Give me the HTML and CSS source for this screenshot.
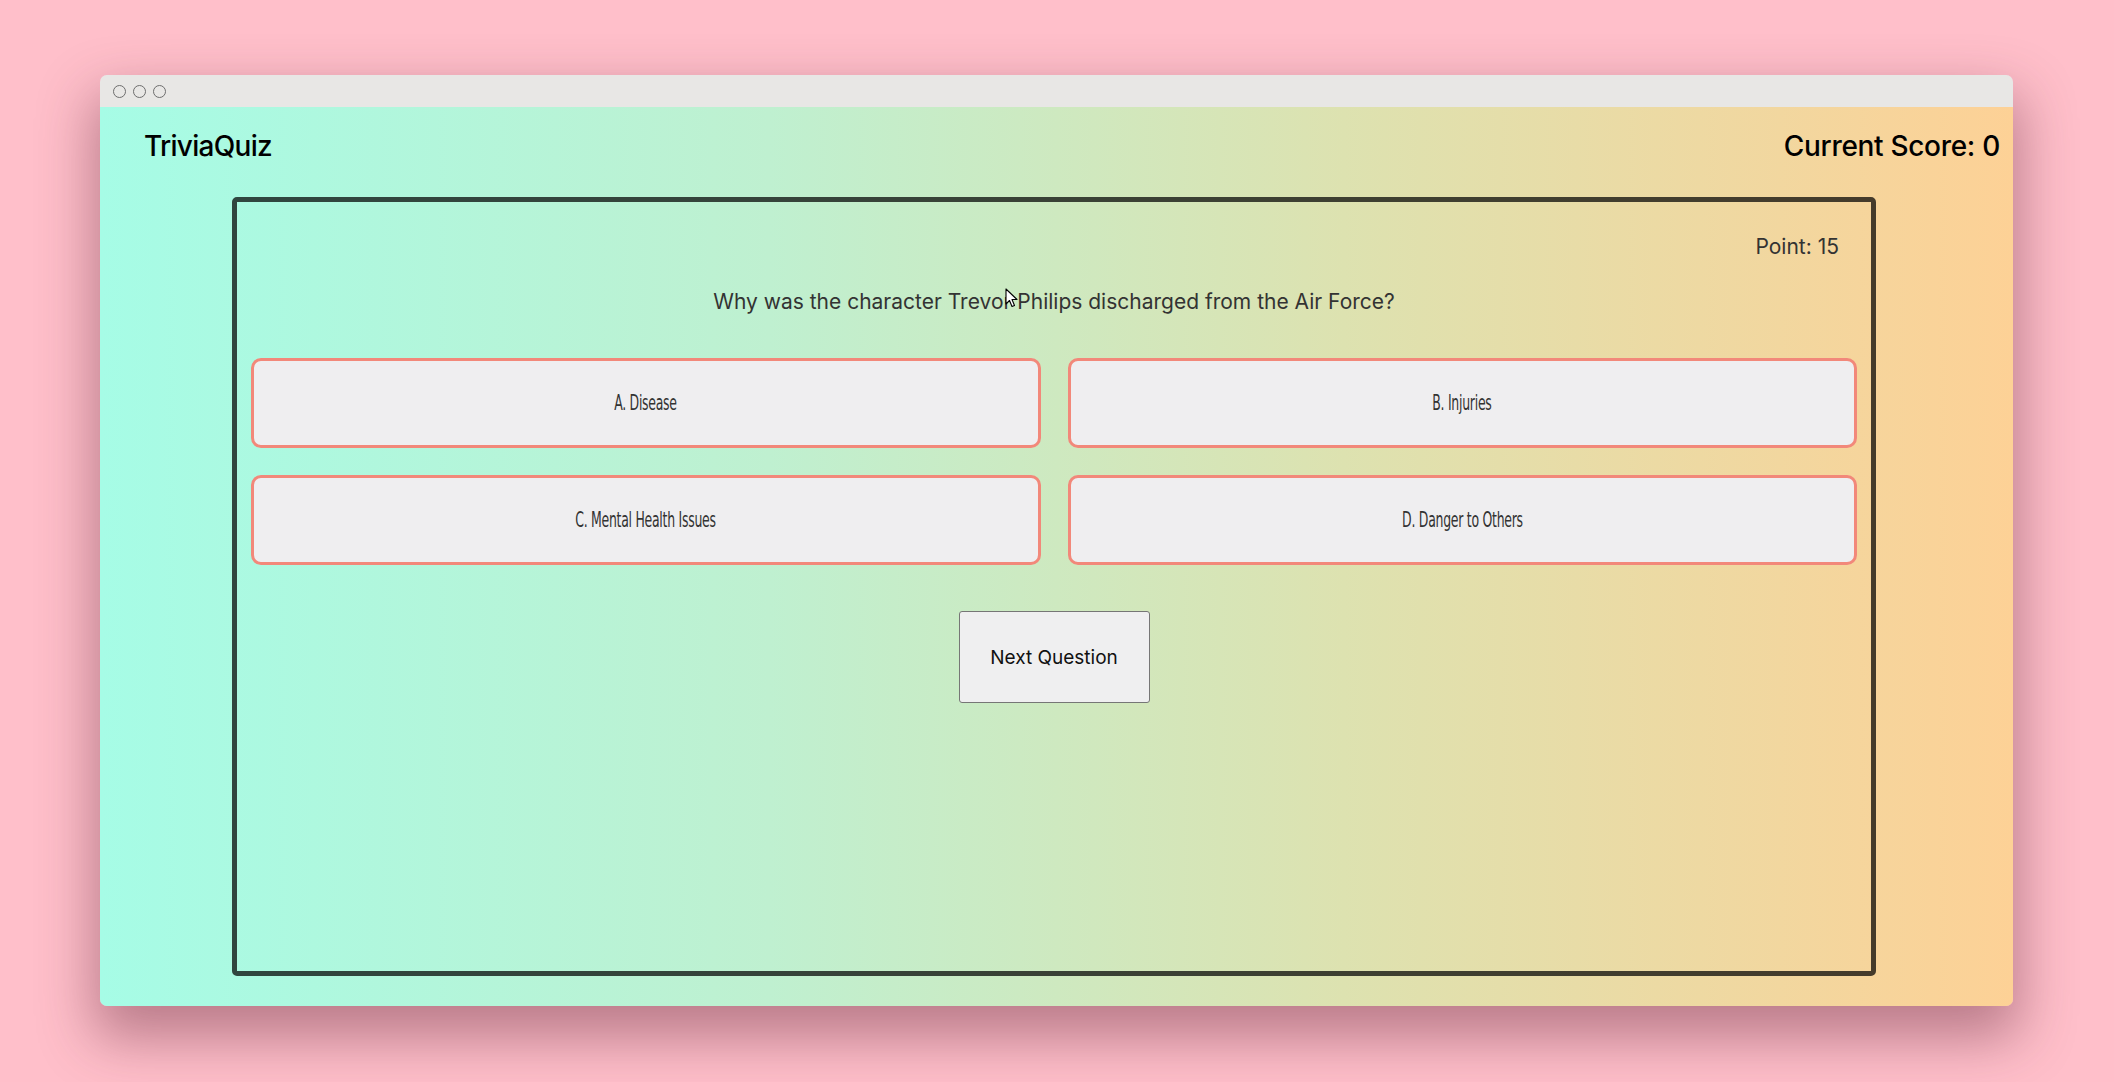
FILE: index.html
```html
<!DOCTYPE html>
<html lang="en">
<head>
<meta charset="utf-8">
<title>TriviaQuiz</title>
<link rel="stylesheet" href="styles.css">
</head>
<body>
<div class="window">
  <div class="titlebar">
    <span class="dot"></span><span class="dot"></span><span class="dot"></span>
  </div>
  <div class="content">
    <header class="header">
      <div class="logo">TriviaQuiz</div>
      <div class="score">Current Score: 0</div>
    </header>
    <main class="card">
      <div class="point">Point: 15</div>
      <div class="question">Why was the character Trevor Philips discharged from the Air Force?</div>
      <div class="answers">
        <button class="answer"><span class="answer-text">A. Disease</span></button>
        <button class="answer"><span class="answer-text">B. Injuries</span></button>
        <button class="answer"><span class="answer-text">C. Mental Health Issues</span></button>
        <button class="answer"><span class="answer-text">D. Danger to Others</span></button>
      </div>
      <div class="next-row"><button class="next">Next Question</button></div>
    </main>
  </div>
</div>
<svg class="cursor" width="14" height="21" viewBox="0 0 14 21"><path d="M1 1 L1 16 L4.5 12.5 L7 18.5 L9.5 17.5 L7 11.5 L12 11.5 Z" fill="#fff" stroke="#000" stroke-width="1.1" stroke-linejoin="round"/></svg>
</body>
</html>
```
FILE: styles.css
```css
html, body {
  margin: 0;
  padding: 0;
}
body {
  background: #ffbfca;
  width: 2114px;
  height: 1082px;
  overflow: hidden;
  position: relative;
  font-family: "Inter", "Liberation Sans", sans-serif;
}
.window {
  margin: 75px 0 0 100px;
  width: 1913px;
  height: 931px;
  border-radius: 7px;
  overflow: hidden;
  box-shadow: 0 26px 55px 6px rgba(90, 30, 50, 0.42);
  display: flex;
  flex-direction: column;
}
.titlebar {
  height: 32px;
  background: #e8e7e5;
  display: flex;
  align-items: center;
  gap: 7px;
  padding-left: 13px;
  flex: none;
}
.dot {
  border: 1.2px solid #6e6e6e;
  border-radius: 50%;
  box-sizing: border-box;
  width: 13px;
  height: 13px;
}
.content {
  flex: 1;
  background: linear-gradient(to right, #a6fce6 0%, #bff0d0 35%, #dde2b0 65%, #fdd196 100%);
  display: flex;
  flex-direction: column;
}
.header {
  height: 78px;
  display: flex;
  align-items: center;
  justify-content: space-between;
  padding: 0 13px 0 44px;
  flex: none;
}
.logo, .score {
  font-size: 28px;
  font-weight: 500;
  color: #000;
  letter-spacing: -0.3px;
}
.logo {
  letter-spacing: -0.7px;
}
.card {
  margin: 12px 0 0 132px;
  width: 1644px;
  height: 779px;
  box-sizing: border-box;
  border: 5px solid rgba(0, 0, 0, 0.72);
  border-radius: 5px;
  padding: 30px 14px 0;
  display: flex;
  flex-direction: column;
}
.point {
  align-self: flex-end;
  margin-right: 18px;
  font-size: 21px;
  line-height: 30px;
  color: #333;
}
.question {
  margin-top: 25px;
  text-align: center;
  font-size: 21px;
  line-height: 30px;
  color: #333;
}
.answers {
  margin-top: 41px;
  display: grid;
  grid-template-columns: 1fr 1fr;
  gap: 27px;
}
.answer {
  height: 90px;
  border: 3px solid #f2887a;
  border-radius: 10px;
  background: #efeef0;
  font-family: "Liberation Sans Narrow", "DejaVu Sans Condensed", sans-serif;
  font-size: 21px;
  color: #333;
  padding: 0;
  display: flex;
  align-items: center;
  justify-content: center;
}
.answer-text {
  display: inline-block;
  transform: scaleX(0.66);
  letter-spacing: -0.4px;
}
.next-row {
  margin-top: 46px;
  display: flex;
  justify-content: center;
}
.next {
  width: 191px;
  height: 92px;
  border: 1px solid #767676;
  border-radius: 3px;
  background: #efeff0;
  font-family: "Inter", "Liberation Sans", sans-serif;
  font-size: 19px;
  color: #111;
  padding: 0;
}
.cursor {
  position: absolute;
  left: 1005px;
  top: 288px;
}
```
